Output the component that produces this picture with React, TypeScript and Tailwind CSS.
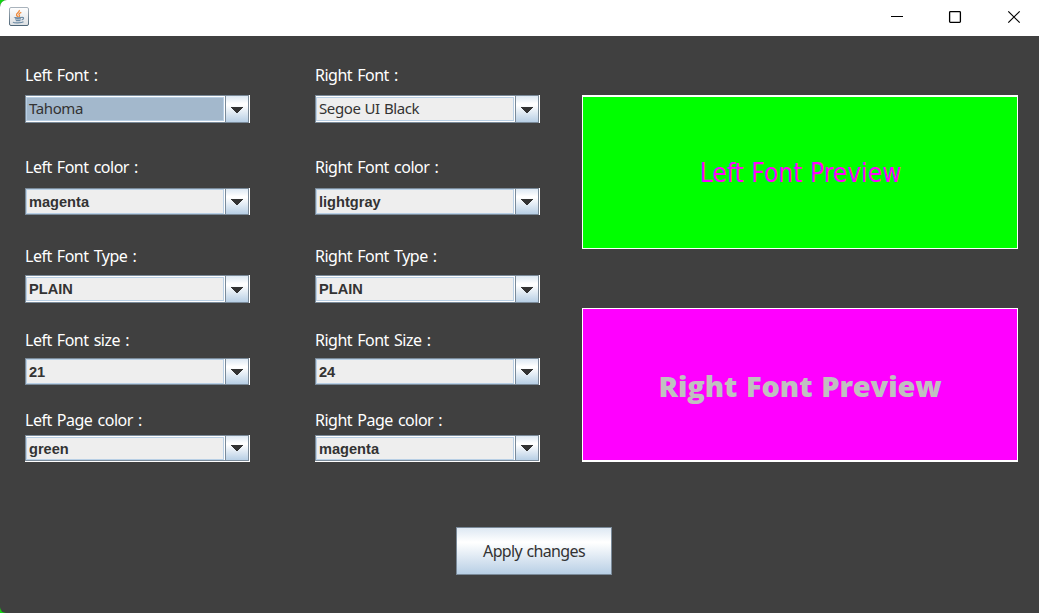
import React from "react";

type FieldData = {
  label: string;
  value: string;
  gap: string;
  box: string;
  inset: string;
  arrow: string;
  plain?: boolean;
  active?: boolean;
  bottomLine?: boolean;
};

const tall = { inset: "my-px", arrow: "mt-[2px]" };
const short = { inset: "my-0", arrow: "mt-px" };
const last = { inset: "mt-px", arrow: "mt-0" };

const leftFields: FieldData[] = [
  { label: "Left Font :", value: "Tahoma", gap: "mt-0", box: "mt-[10px] h-[28px]", plain: true, active: true, ...tall },
  { label: "Left Font color :", value: "magenta", gap: "mt-[34px]", box: "mt-[11px] h-[27px]", ...short },
  { label: "Left Font Type :", value: "PLAIN", gap: "mt-[31px]", box: "mt-[9px] h-[28px]", ...tall },
  { label: "Left Font size :", value: "21", gap: "mt-[27px]", box: "mt-[8px] h-[27px]", ...short },
  { label: "Left Page color :", value: "green", gap: "mt-[25px]", box: "mt-[5px] h-[27px]", bottomLine: true, ...last },
];

const rightFields: FieldData[] = [
  { label: "Right Font :", value: "Segoe UI Black", gap: "mt-0", box: "mt-[10px] h-[28px]", plain: true, ...tall },
  { label: "Right Font color :", value: "lightgray", gap: "mt-[34px]", box: "mt-[11px] h-[27px]", ...short },
  { label: "Right Font Type :", value: "PLAIN", gap: "mt-[31px]", box: "mt-[9px] h-[28px]", ...tall },
  { label: "Right Font Size :", value: "24", gap: "mt-[27px]", box: "mt-[8px] h-[27px]", ...short },
  { label: "Right Page color :", value: "magenta", gap: "mt-[25px]", box: "mt-[5px] h-[27px]", bottomLine: true, ...last },
];

function Field({ label, value, gap, box, inset, arrow, plain, active, bottomLine }: FieldData) {
  return (
    <div className={`flex flex-col ${gap}`}>
      <label className="h-[20px] font-['Noto_Sans',sans-serif] text-[16px] leading-[20px] tracking-[-0.5px] whitespace-nowrap text-white [word-spacing:1.5px]">
        {label}
      </label>
      <div className={`flex w-[225px] border-r border-white ${bottomLine ? "border-b" : ""} ${box}`}>
        <div className="flex flex-1 border border-[#7a8a99] bg-white">
          <div
            className={`mr-px flex min-w-0 flex-1 items-center border border-[#b8cfe5] pl-[2px] whitespace-nowrap text-[#333333] ${inset} ${
              active ? "bg-[#a3b8cc]" : "bg-[#eeeeee]"
            } ${
              plain
                ? "pb-[2px] font-['Noto_Sans',sans-serif] text-[15px] leading-[20px] tracking-[-0.4px] [word-spacing:0.6px]"
                : "font-['Liberation_Sans',sans-serif] text-[14.6px] leading-[18px] font-bold"
            }`}
          >
            <span className={bottomLine ? "pt-px" : ""}>{value}</span>
          </div>
          <div className="flex w-[23px] items-center justify-center border-l border-[#7a8a99] bg-[linear-gradient(to_bottom,#dde8f3_0%,#ffffff_30%,#ffffff_35%,#b8cfe5_100%)]">
            <svg width="12" height="6" viewBox="0 0 12 6" className={arrow} shapeRendering="crispEdges">
              <path d="M0 0H12V1H11V2H10V3H9V4H8V5H7V6H5V5H4V4H3V3H2V2H1V1H0Z" fill="#333333" />
            </svg>
          </div>
        </div>
      </div>
    </div>
  );
}

function JavaIcon() {
  return (
    <svg width="20" height="19" viewBox="0 0 20 19">
      <defs>
        <linearGradient id="tile" x1="0" y1="0" x2="0" y2="1">
          <stop offset="0" stopColor="#ffffff" />
          <stop offset="1" stopColor="#dcdfe2" />
        </linearGradient>
        <linearGradient id="edge" x1="0" y1="0" x2="0" y2="1">
          <stop offset="0" stopColor="#a9b3bc" />
          <stop offset="1" stopColor="#4e6678" />
        </linearGradient>
      </defs>
      <rect x="0.5" y="0.5" width="19" height="18" rx="1.5" fill="url(#tile)" stroke="url(#edge)" />
      <path d="M10.3 3C11.2 5 7 6.2 7.5 8C7.8 9 8.7 9.4 9.2 10M12.3 5.4C10.5 6.2 9.4 7 10.2 8C10.9 8.8 10.6 9.4 10 10" fill="none" stroke="#ef8a3c" strokeWidth="1.3" />
      <path d="M5.5 10.3C4.8 11 12 11 12.8 10.3M6 12H12M6.8 13.6H11.5M12.8 10.5C15.3 9.8 15 12.5 12.6 13M4 15.2C5 16.2 12.5 16.2 14.5 14.8" fill="none" stroke="#6d8ba5" strokeWidth="1.2" />
    </svg>
  );
}

export default function App() {
  return (
    <div className="h-[613px] w-[1039px] overflow-hidden bg-[#12d512]">
      <div className="flex h-full flex-col overflow-hidden rounded-tl-[7px] rounded-bl-[6px] bg-[#404040]">
        <header className="flex h-[36px] shrink-0 items-start justify-between bg-white pt-[7px] pl-[9px]">
          <JavaIcon />
          <div className="flex pt-[3px] pr-[18px]">
            <svg width="14" height="14" viewBox="0 0 14 14" className="mr-[44px]">
              <path d="M1 6.5H13" stroke="#000" fill="none" />
            </svg>
            <svg width="14" height="14" viewBox="0 0 14 14" className="mr-[45px]">
              <rect x="1.6" y="1.6" width="10.8" height="10.8" rx="0.8" stroke="#000" strokeWidth="1.3" fill="none" />
            </svg>
            <svg width="14" height="14" viewBox="0 0 14 14">
              <path d="M1.3 1.3L12.7 12.7M12.7 1.3L1.3 12.7" stroke="#000" strokeWidth="1.2" fill="none" />
            </svg>
          </div>
        </header>
        <main className="flex flex-1 flex-col">
          <div className="flex pt-[29px] pl-[25px]">
            <section className="w-[290px]">
              {leftFields.map((f) => (
                <Field key={f.label} {...f} />
              ))}
            </section>
            <section className="w-[267px]">
              {rightFields.map((f) => (
                <Field key={f.label} {...f} />
              ))}
            </section>
            <section className="flex w-[436px] flex-col pt-[30px]">
              <div className="flex h-[154px] items-center justify-center border border-t-2 border-white bg-[#00ff00]">
                <span className="pl-px font-['DejaVu_Sans_Condensed','DejaVu_Sans',sans-serif] text-[26px] leading-[32px] tracking-[0.07px] whitespace-nowrap text-[#ff00ff] [font-stretch:condensed]">
                  Left Font Preview
                </span>
              </div>
              <div className="mt-[59px] flex h-[154px] items-center justify-center border border-b-2 border-white bg-[#ff00ff]">
                <span className="mt-[2px] font-['Open_Sans',sans-serif] text-[29px] leading-[36px] font-extrabold tracking-[-0.15px] whitespace-nowrap text-[#c0c0c0] [word-spacing:1.5px]">
                  Right Font Preview
                </span>
              </div>
            </section>
          </div>
          <button className="mt-[65px] ml-[456px] h-[48px] w-[156px] border border-[#7a8a99] bg-[linear-gradient(to_bottom,#dde8f3_0%,#ffffff_30%,#ffffff_32%,#b8cfe5_100%)] pb-[1px] font-['Noto_Sans',sans-serif] text-[16px] leading-[20px] tracking-[-0.65px] whitespace-nowrap text-[#333333] [word-spacing:1px]">
            Apply changes
          </button>
        </main>
      </div>
    </div>
  );
}
